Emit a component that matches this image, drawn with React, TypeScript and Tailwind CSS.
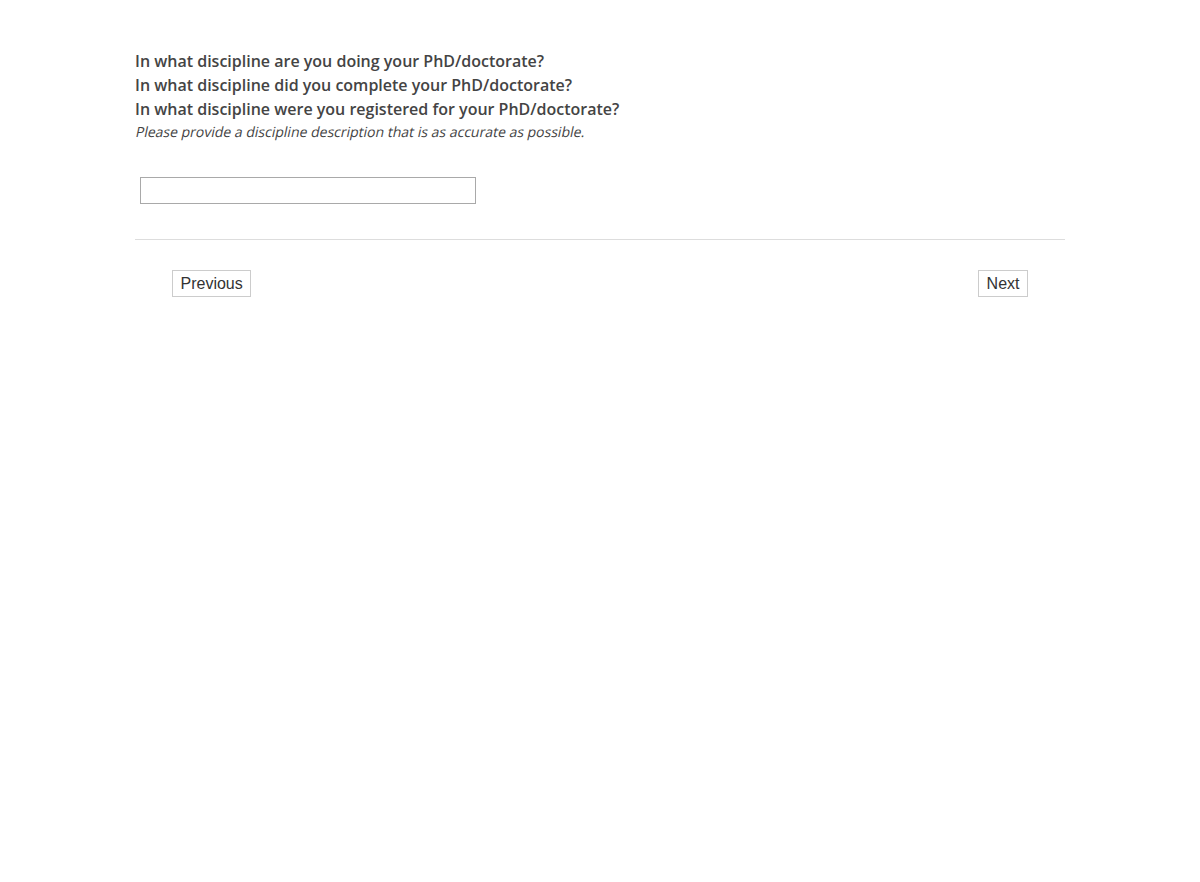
import React from "react";

export default function App() {
  return (
    <div className="min-h-[882px] bg-white">
      <div className="mx-auto w-[930px] pt-[49px] font-['Open_Sans',sans-serif] text-[#444444]">
        <div className="text-[16px] font-semibold leading-[24px]">
          <div>In what discipline are you doing your PhD/doctorate?</div>
          <div>In what discipline did you complete your PhD/doctorate?</div>
          <div>In what discipline were you registered for your PhD/doctorate?</div>
        </div>
        <div className="pt-[1px] text-[14px] leading-[20px]">
          <span className="inline-block origin-[0_75%] -skew-x-[12deg]">
            Please provide a discipline description that is as accurate as possible.
          </span>
        </div>
        <div className="pl-[5px] pt-[35px]">
          <input
            type="text"
            className="block h-[27px] w-[336px] border border-[#a9a9a9] bg-white px-1 outline-none"
          />
        </div>
        <div className="mt-[35px] border-t border-[#dddddd]" />
        <div className="flex justify-between px-[37px] pt-[30px] font-['Liberation_Sans',Arial,sans-serif]">
          <button className="h-[27px] border border-[#cccccc] bg-white px-[7.5px] text-[16px] leading-[25px] text-[#333333]">
            Previous
          </button>
          <button className="h-[27px] border border-[#cccccc] bg-white px-[7.5px] text-[16px] leading-[25px] text-[#333333]">
            Next
          </button>
        </div>
      </div>
    </div>
  );
}
